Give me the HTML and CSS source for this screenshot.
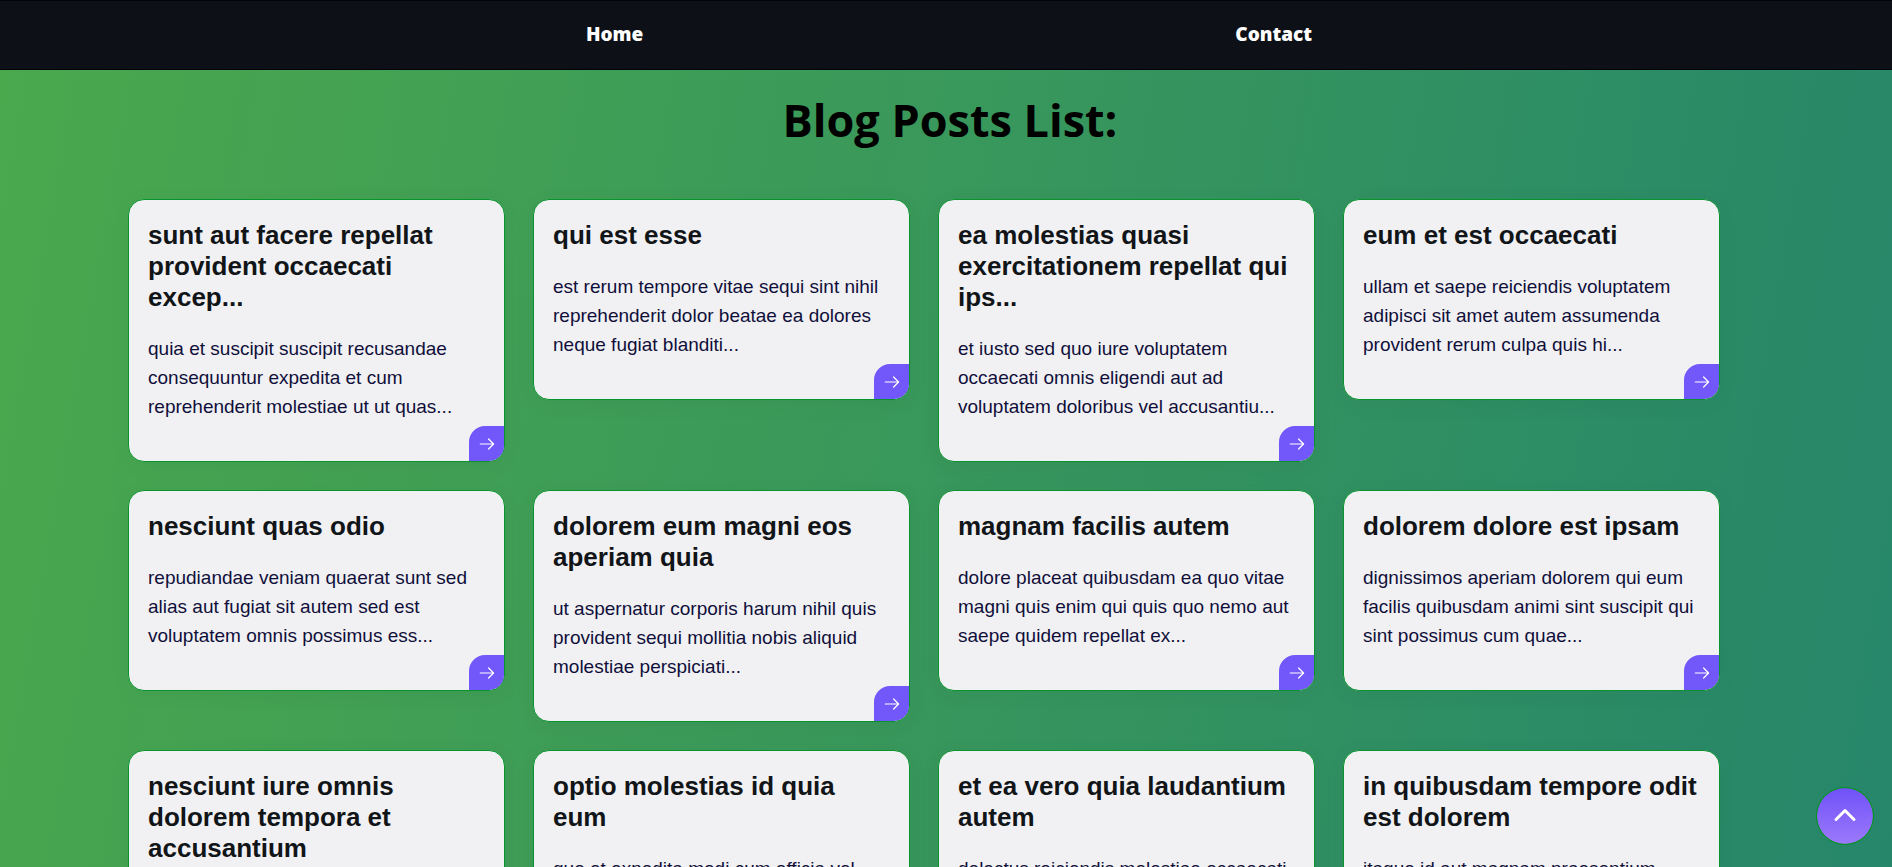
FILE: index.html
```html
<!DOCTYPE html>
<html lang="en">
<head>
<meta charset="utf-8">
<meta name="viewport" content="width=device-width, initial-scale=1">
<title>Blog Posts</title>
<link rel="stylesheet" href="styles.css">
</head>
<body>
<header class="site-header">
  <nav class="nav">
    <a class="nav-link" href="#home">Home</a>
    <a class="nav-link" href="#contact">Contact</a>
  </nav>
</header>
<main class="page">
  <h1 class="page-title">Blog Posts List:</h1>
  <div class="posts" id="posts"></div>
</main>
<a class="to-top" href="#" aria-label="Back to top">
  <svg width="24" height="24" viewBox="0 0 24 24" fill="none" stroke="currentColor" stroke-width="3" stroke-linecap="round" stroke-linejoin="round"><path d="M3 15.5l9-9 9 9"/></svg>
</a>
<script src="posts.js"></script>
</body>
</html>
```
FILE: posts.js
```js
const posts = [
  ["sunt aut facere repellat provident occaecati excep...", "quia et suscipit suscipit recusandae consequuntur expedita et cum reprehenderit molestiae ut ut quas..."],
  ["qui est esse", "est rerum tempore vitae sequi sint nihil reprehenderit dolor beatae ea dolores neque fugiat blanditi..."],
  ["ea molestias quasi exercitationem repellat qui ips...", "et iusto sed quo iure voluptatem occaecati omnis eligendi aut ad voluptatem doloribus vel accusantiu..."],
  ["eum et est occaecati", "ullam et saepe reiciendis voluptatem adipisci sit amet autem assumenda provident rerum culpa quis hi..."],
  ["nesciunt quas odio", "repudiandae veniam quaerat sunt sed alias aut fugiat sit autem sed est voluptatem omnis possimus ess..."],
  ["dolorem eum magni eos aperiam quia", "ut aspernatur corporis harum nihil quis provident sequi mollitia nobis aliquid molestiae perspiciati..."],
  ["magnam facilis autem", "dolore placeat quibusdam ea quo vitae magni quis enim qui quis quo nemo aut saepe quidem repellat ex..."],
  ["dolorem dolore est ipsam", "dignissimos aperiam dolorem qui eum facilis quibusdam animi sint suscipit qui sint possimus cum quae..."],
  ["nesciunt iure omnis dolorem tempora et accusantium", "consectetur animi nesciunt iure dolore enim quia ad veniam autem ut quam aut nobis et est aut quod a..."],
  ["optio molestias id quia eum", "quo et expedita modi cum officia vel magni doloribus qui repudiandae vero nisi sit quos veniam quod..."],
  ["et ea vero quia laudantium autem", "delectus reiciendis molestiae occaecati non minima eveniet qui voluptatibus accusamus in eum beatae..."],
  ["in quibusdam tempore odit est dolorem", "itaque id aut magnam praesentium quia&nbsp;et ea odit et ea voluptas et sapiente quia nihil amet occaecat..."]
];

const arrow = '<svg width="16" height="16" viewBox="0 0 16 16" fill="none" stroke="currentColor" stroke-width="1.2" stroke-linecap="round" stroke-linejoin="round"><path d="M1.3 8h13.2M9.6 3l5 5-5 5"/></svg>';

document.getElementById("posts").innerHTML = posts.map(([title, body], i) => `
  <article class="card">
    <h2 class="card-title">${title}</h2>
    <p class="card-text">${body}</p>
    <a class="card-more" href="#post-${i + 1}" aria-label="Read post ${i + 1}">${arrow}</a>
  </article>`).join("");
```
FILE: styles.css
```css
* { box-sizing: border-box; }

body {
  margin: 0;
  height: 100vh;
  overflow: hidden;
  font-family: "Liberation Sans", Arial, sans-serif;
  background: linear-gradient(100deg, #4aa84d, #26866a);
}

.site-header {
  background: #0d1117;
  border-top: 1px solid #010409;
  border-bottom: 1px solid #010409;
}

.nav {
  display: flex;
  justify-content: space-evenly;
  align-items: center;
  gap: 12px;
  height: 68px;
  padding: 0 0 2px 6px;
}

.nav-link {
  color: #fff;
  font-family: "Open Sans", sans-serif;
  font-size: 19px;
  font-weight: 800;
  text-decoration: none;
}

.page {
  padding: 20px 172px 0 128px;
}

.page-title {
  margin: 0 -172px 49px -128px;
  padding-left: 8px;
  font-family: "Open Sans", sans-serif;
  font-size: 45px;
  line-height: 60px;
  text-align: center;
  color: #000;
}

.posts {
  display: grid;
  grid-template-columns: repeat(4, 1fr);
  gap: 28px;
  align-items: start;
}

.card {
  position: relative;
  overflow: hidden;
  padding: 20px 19px;
  border: 1px solid #08942c;
  border-radius: 16px;
  background: #f1f1f4;
  box-shadow: 0 4px 24px rgba(0, 0, 0, 0.04);
}

.card-title {
  margin: 0 0 21px;
  font-size: 26px;
  line-height: 31px;
  color: #111518;
}

.card-text {
  margin: 0 0 20px;
  font-size: 19px;
  line-height: 29px;
  color: #100f3a;
}

.card-more {
  position: absolute;
  right: 0;
  bottom: 0;
  display: flex;
  align-items: center;
  justify-content: center;
  width: 35px;
  height: 35px;
  border-radius: 16px 0 0 0;
  background: #7257fa;
  color: #fff;
}

.to-top {
  position: fixed;
  right: 18px;
  bottom: 22px;
  display: flex;
  align-items: center;
  justify-content: center;
  width: 58px;
  height: 58px;
  border: 1px solid #08941c;
  border-radius: 50%;
  background: linear-gradient(#6f52f8, #9c79fb) padding-box;
  color: #fff;
}
```
